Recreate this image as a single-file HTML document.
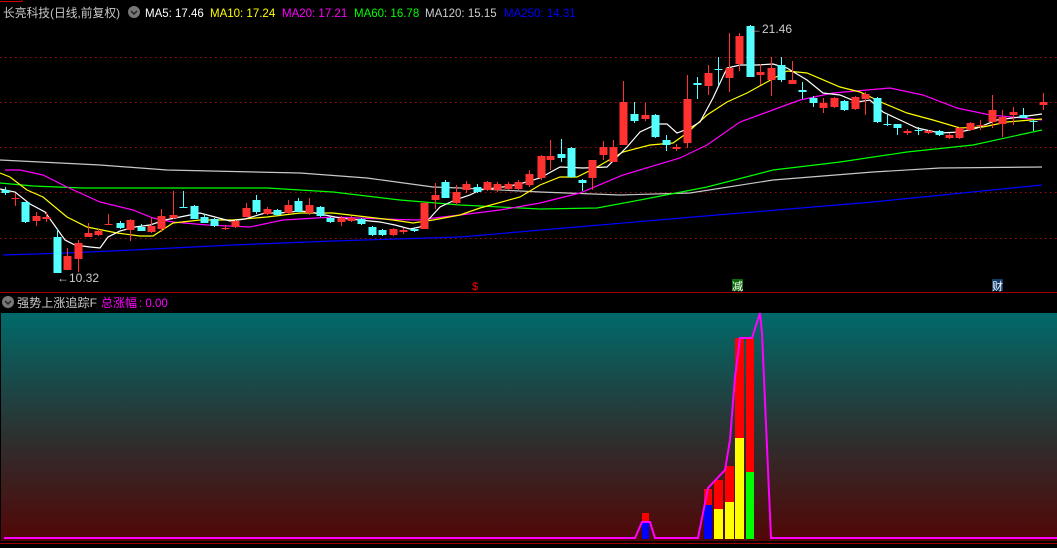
<!DOCTYPE html>
<html><head><meta charset="utf-8">
<style>
html,body{margin:0;padding:0;background:#000;width:1057px;height:548px;overflow:hidden}
svg{display:block}
text{font-family:"Liberation Sans","Noto Sans CJK SC",sans-serif}
</style></head><body>
<svg id="s" width="1057" height="548" xmlns="http://www.w3.org/2000/svg">
<defs>
<linearGradient id="g" x1="0" y1="0" x2="0" y2="1">
<stop offset="0" stop-color="#006a6a"/>
<stop offset="0.5" stop-color="#2a3434"/>
<stop offset="1" stop-color="#520606"/>
</linearGradient>
</defs>
<rect x="0" y="0" width="1057" height="548" fill="#000"/>
<path d="M0 1.5H22V0" stroke="#c00" fill="none"/>
<g stroke="#a01010" stroke-dasharray="1.5,3.5" stroke-width="1">
<line x1="0" y1="57.5" x2="1057" y2="57.5"/>
<line x1="0" y1="102.5" x2="1057" y2="102.5"/>
<line x1="0" y1="147.5" x2="1057" y2="147.5"/>
<line x1="0" y1="192.5" x2="1057" y2="192.5"/>
<line x1="0" y1="238.5" x2="1057" y2="238.5"/>
</g>
<g id="lines" fill="none" stroke-width="1.2"></g>
<g id="cand"></g>
<text x="3" y="17" fill="#c8c8c8" font-size="12" textLength="117" lengthAdjust="spacingAndGlyphs">长亮科技(日线,前复权)</text>
<circle cx="134" cy="12" r="6" fill="#777"/><path d="M131 11l3 3 3-3" stroke="#222" stroke-width="1.5" fill="none"/>
<text y="17" font-size="11.5"><tspan x="145" fill="#fff">MA5: 17.46</tspan><tspan x="210" fill="#ff0">MA10: 17.24</tspan><tspan x="282" fill="#f0f">MA20: 17.21</tspan><tspan x="354" fill="#0f0">MA60: 16.78</tspan><tspan x="425" fill="#ccc">MA120: 15.15</tspan><tspan x="504" fill="#00f">MA250: 14.31</tspan></text>
<text x="57" y="282" fill="#ccc" font-size="12">←10.32</text>
<text x="750" y="33" fill="#ccc" font-size="12">←21.46</text>
<text x="472" y="290" fill="#f00" font-size="11">$</text>
<rect x="732" y="279" width="11" height="12" fill="#0a6a0a"/><text x="732" y="290" fill="#fff" font-size="11">减</text>
<rect x="992" y="279" width="11" height="12" fill="#103a6a"/><text x="992" y="290" fill="#fff" font-size="11">财</text>
<line x1="0" y1="292.5" x2="1057" y2="292.5" stroke="#a00000"/>
<circle cx="8" cy="302" r="6" fill="#777"/><path d="M5 301l3 3 3-3" stroke="#222" stroke-width="1.5" fill="none"/>
<text x="17" y="307" fill="#ccc" font-size="12" textLength="80" lengthAdjust="spacingAndGlyphs">强势上涨追踪F</text>
<text x="101" y="307" fill="#f0f" font-size="12" textLength="36" lengthAdjust="spacingAndGlyphs">总涨幅</text>
<text x="139" y="307" fill="#f0f" font-size="11.5">: 0.00</text>
<rect x="1" y="313" width="1056" height="228" fill="url(#g)"/>
<line x1="0" y1="543.5" x2="1057" y2="543.5" stroke="#a00000"/>
<g>
<rect x="642" y="513" width="7" height="8" fill="#f00"/><rect x="642" y="521" width="7" height="18" fill="#00f"/>
<rect x="704" y="489" width="8" height="16" fill="#f00"/><rect x="704" y="505" width="8" height="34" fill="#00f"/>
<rect x="714" y="480" width="9" height="29" fill="#f00"/><rect x="714" y="509" width="9" height="30" fill="#ff0"/>
<rect x="725" y="466" width="9" height="36" fill="#f00"/><rect x="725" y="502" width="9" height="37" fill="#ff0"/>
<rect x="735" y="338" width="9" height="100" fill="#f00"/><rect x="735" y="438" width="9" height="101" fill="#ff0"/>
<rect x="746" y="338" width="8" height="134" fill="#f00"/><rect x="746" y="472" width="8" height="67" fill="#0f0"/>
</g>
<polyline fill="none" stroke="#f0f" stroke-width="2" points="4,538 635,538 642,522 650,522 655,538 698,538 708,488 725,470 730,440 735,377 740,338 752,338 760,313 762,333 771,538 1057,538"/>
</svg>
<script>
var NS="http://www.w3.org/2000/svg";
function pl(c,p){var e=document.createElementNS(NS,"polyline");e.setAttribute("points",p);e.setAttribute("stroke",c);document.getElementById("lines").appendChild(e);}
pl("#0000ff","3,255 67,253 133,250 233,245 333,241 460,237 600,225 717,215 873,202 1042,185");
pl("#c8c8c8","0,160 100,165 167,170 300,173 367,178 433,187 460,188 540,192 620,195 690,193 773,180 873,172 940,168 1042,167");
pl("#00ff00","0,183 33,186 83,188 267,188 333,192 400,200 460,205 540,209 597,208 640,200 707,187 773,170 840,162 907,152 973,145 1042,130");
pl("#ff00ff","5,170 20,170 43,175 67,187 100,202 133,210 153,218 173,222 207,225 250,227 283,220 333,217 383,219 417,220 460,215 500,210 540,203 580,193 623,175 680,158 707,145 740,122 800,100 833,93 890,88 923,95 957,108 990,115 1023,118 1042,120");
pl("#ffff00","0,173 10,177 27,190 43,197 67,217 87,227 117,233 140,236 153,236 173,223 200,220 233,220 267,217 300,213 333,213 367,217 393,220 413,223 433,220 460,215 480,208 520,197 540,185 560,177 577,177 597,167 623,152 650,145 673,143 687,133 707,115 727,102 747,93 767,82 787,71 807,73 840,87 860,92 883,103 907,113 933,120 960,128 983,127 1007,122 1042,119");
pl("#ffffff","0,189 15,192 30,204 45,212 55,226 65,240 75,245 90,247 100,248 108,237 120,231 135,227 150,225 165,220 185,216 200,213 215,217 230,221 245,219 265,213 280,213 300,211 310,212 325,215 340,218 360,220 380,222 395,225 410,229 420,227 430,218 440,207 455,200 470,195 480,190 495,188 510,186 523,183 540,178 560,167 583,168 607,167 627,147 640,132 657,124 667,124 677,133 690,128 700,122 713,98 727,68 740,65 757,65 773,64 787,68 807,80 823,93 840,95 857,102 870,100 883,112 900,120 917,128 940,133 960,132 977,128 997,120 1020,117 1042,114");
var d=[[5,190,193,187,195,0],[15,198,199,193,206,1],[25,202,222,202,223,0],[36,216,221,212,226,1],[46,217,219,212,222,1],[57,237,273,229,273,0],[67,256,270,248,270,1],[78,243,259,240,272,1],[88,233,237,223,237,1],[98,231,235,229,236,1],[108,224,225,214,225,1],[120,223,228,221,229,0],[130,220,230,219,241,1],[141,227,231,224,231,0],[151,226,232,218,233,1],[161,216,229,209,232,1],[173,215,218,191,219,1],[183,207,208,191,208,0],[194,206,219,205,219,0],[204,217,223,214,223,0],[214,219,226,218,227,0],[225,228,229,225,230,1],[235,221,227,220,228,1],[246,208,217,203,217,1],[256,200,212,195,214,0],[267,209,214,207,215,1],[277,210,215,209,216,0],[288,205,213,200,214,1],[298,201,212,198,212,0],[309,205,213,198,215,1],[320,207,216,206,217,0],[330,218,222,216,223,0],[341,218,222,216,226,1],[351,218,221,216,222,1],[361,219,224,218,225,0],[372,227,235,226,236,0],[382,230,235,229,236,0],[393,229,235,228,236,1],[403,230,232,228,234,1],[414,229,231,228,232,0],[424,203,229,202,229,1],[435,195,200,183,209,1],[445,182,198,180,198,0],[456,192,203,185,205,1],[466,184,190,181,193,1],[477,187,192,184,193,0],[487,182,190,181,191,1],[497,184,190,182,192,1],[508,184,189,182,190,1],[518,182,189,180,190,1],[529,174,185,170,187,1],[541,156,178,155,180,1],[550,156,160,140,170,1],[561,154,158,139,162,0],[571,148,177,147,178,0],[582,180,183,179,191,0],[592,160,178,160,190,1],[603,147,155,141,160,1],[613,147,162,140,162,1],[623,102,145,81,145,1],[634,114,121,102,123,0],[645,115,119,103,121,1],[655,115,137,114,138,0],[666,140,145,135,151,0],[676,147,149,144,151,1],[687,99,143,75,148,1],[697,83,85,77,99,0],[708,73,86,65,95,1],[718,69,70,57,86,0],[729,68,78,33,92,1],[739,36,64,33,71,1],[750,26,77,25,77,0],[760,72,75,64,85,1],[771,68,80,57,96,1],[781,65,80,57,82,0],[792,80,84,61,84,1],[802,90,92,82,99,0],[813,98,103,96,107,0],[823,103,108,98,113,1],[834,98,107,97,108,1],[844,101,110,100,111,0],[855,97,109,96,110,1],[865,94,99,92,115,1],[877,98,122,97,123,0],[887,124,125,115,126,0],[897,124,128,124,135,0],[907,131,133,129,135,1],[918,130,131,127,135,0],[928,131,133,130,134,1],[939,131,135,130,136,0],[949,135,138,133,139,1],[959,128,138,127,139,1],[970,123,130,122,131,1],[980,125,126,120,130,1],[992,110,122,95,128,1],[1002,117,124,110,137,1],[1013,112,115,107,125,1],[1023,115,118,108,118,0],[1033,121,122,120,131,0],[1043,102,105,93,110,1]];
var g=document.getElementById("cand"),h="";
d.forEach(function(c){var col=c[5]?"#ff3232":"#54ffff";
h+='<line x1="'+(c[0]+.5)+'" y1="'+c[3]+'" x2="'+(c[0]+.5)+'" y2="'+c[4]+'" stroke="'+col+'"/>';
h+='<rect x="'+(c[0]-3.5)+'" y="'+c[1]+'" width="8" height="'+Math.max(1,c[2]-c[1])+'" fill="'+col+'"/>';});
g.innerHTML=h;
</script>
</body></html>
